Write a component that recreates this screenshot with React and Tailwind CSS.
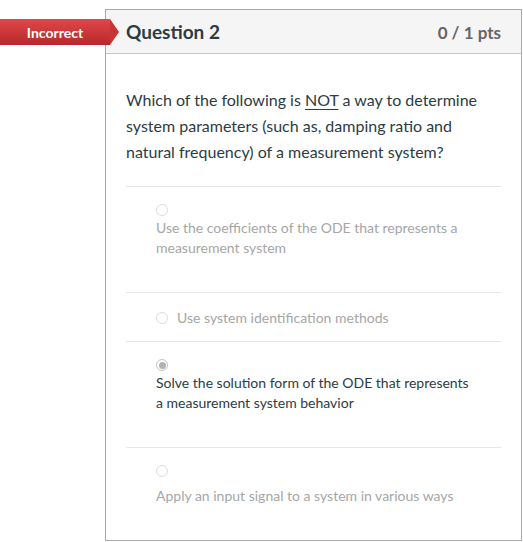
export default function App() {
  const answers = [
    { text: "Use the coefficients of the ODE that represents a measurement system", inline: false, selected: false, h: "h-[106px]" },
    { text: "Use system identification methods", inline: true, selected: false, h: "h-[49px]" },
    { text: "Solve the solution form of the ODE that represents a measurement system behavior", inline: false, selected: true, h: "h-[106px]" },
    { text: "Apply an input signal to a system in various ways", inline: false, selected: false, h: "h-[93px]" },
  ];

  return (
    <div className="relative w-[523px] h-[542px] bg-white font-['Lato',sans-serif]">
      {/* Incorrect ribbon */}
      <div className="absolute left-0 top-[19px] flex h-[26px] z-10">
        <div className="w-[110px] h-full bg-gradient-to-b from-[#e0474a] to-[#b8282b] flex items-center justify-center text-white text-[14px] font-bold">
          Incorrect
        </div>
        <div className="w-0 h-0 border-y-[13px] border-y-transparent border-l-[9px] border-l-[#c93336]" />
      </div>

      <div className="absolute left-[105px] top-[9px] w-[417px] h-[532px] border border-[#aaaaaa] flex flex-col">
        <div className="h-[51px] bg-[#f5f5f5] border-b border-[#c7c7c7] flex items-center justify-between pl-[20px] pr-[20px] pt-[2px]">
          <span className="text-[19px] font-bold text-[#2d3b45]">Question 2</span>
          <span className="text-[17px] font-bold text-[#666666]">0 / 1 pts</span>
        </div>

        <div className="px-[20px]">
          <p className="pt-[33px] pb-[21px] text-[16px] leading-[26px] text-[#2d3b45]">
            Which of the following is <span className="underline underline-offset-[3px]">NOT</span> a way to determine system parameters (such as, damping ratio and natural frequency) of a measurement system?
          </p>

          {answers.map((a, i) => (
            <div key={i} className={`border-t border-[#e6e6e6] ${a.h} pl-[30px] pr-[28px] ${a.inline ? "pt-[15px]" : "pt-[17px]"}`}>
              {a.inline ? (
                <div className="flex items-center gap-[9px] text-[14px] leading-[20px] text-[#a6a6a6]">
                  <Radio selected={a.selected} />
                  <span>{a.text}</span>
                </div>
              ) : (
                <>
                  <Radio selected={a.selected} />
                  <div className={`text-[14px] leading-[20px] ${a.selected ? "text-[#2d3b45]" : "text-[#a6a6a6]"} ${i === 3 ? "mt-[9px]" : "mt-[2px]"}`}>
                    {a.text}
                  </div>
                </>
              )}
            </div>
          ))}
        </div>
      </div>
    </div>
  );
}

function Radio({ selected }) {
  return (
    <div className={`w-[12px] h-[12px] rounded-full border bg-white flex items-center justify-center ${selected ? "border-[#c4c4c4]" : "border-[#dcdcdc]"}`}>
      {selected && <div className="w-[7px] h-[7px] rounded-full bg-[#b3b3b3]" />}
    </div>
  );
}
